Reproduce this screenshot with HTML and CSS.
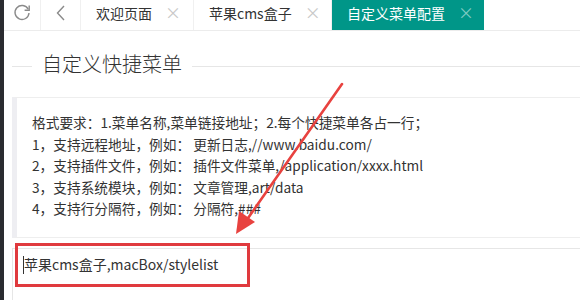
FILE: index.html
```html
<!DOCTYPE html>
<html lang="zh-CN">
<head>
<meta charset="utf-8">
<title>自定义菜单配置</title>
<link rel="stylesheet" href="styles.css">
</head>
<body>
<div class="frame">
  <div class="side-strip"></div>
  <div class="main">
    <div class="tabbar">
      <div class="tool">
        <svg width="20" height="20" viewBox="0 0 20 20"><path d="M16.2 6.2A7 7 0 1 0 17 10" fill="none" stroke="#8a8a8a" stroke-width="1.4"/><path d="M17.2 2.6 L17.2 7.2 L12.6 7.2" fill="none" stroke="#8a8a8a" stroke-width="1.4"/></svg>
      </div>
      <div class="tool">
        <svg width="12" height="18" viewBox="0 0 12 18"><path d="M9 2 L2.5 9 L9 16" fill="none" stroke="#8a8a8a" stroke-width="1.4"/></svg>
      </div>
      <div class="tab tab-w1">欢迎页面<span class="x">×</span></div>
      <div class="tab tab-w2">苹果cms盒子<span class="x">×</span></div>
      <div class="tab active">自定义菜单配置<span class="x">×</span></div>
    </div>
    <div class="content">
      <div class="field-title">
        <span class="line short"></span>
        <span class="legend">自定义快捷菜单</span>
        <span class="line long"></span>
      </div>
      <div class="quote">
        <p>格式要求：1.菜单名称,菜单链接地址；2.每个快捷菜单各占一行；</p>
        <p>1，支持远程地址，例如： 更新日志,//www.baidu.com/</p>
        <p>2，支持插件文件，例如： 插件文件菜单,/application/xxxx.html</p>
        <p>3，支持系统模块，例如： 文章管理,art/data</p>
        <p>4，支持行分隔符，例如： 分隔符,###</p>
      </div>
      <div class="textarea"><span class="caret"></span>苹果cms盒子,macBox/stylelist</div>
    </div>
  </div>
  <div class="highlight"></div>
  <svg class="arrow" width="580" height="300" viewBox="0 0 580 300">
    <path d="M342 84 L246 221" stroke="#e8423f" stroke-width="2.6" fill="none" stroke-linecap="round"/>
    <path d="M236 234 L239 211 L255 222 Z" fill="#e8423f"/>
  </svg>
</div>
</body>
</html>
```
FILE: styles.css
```css
* { box-sizing: border-box; }
html, body { margin: 0; padding: 0; background: #fff; }
body {
  font-family: "Noto Sans CJK SC", "Microsoft YaHei", sans-serif;
  color: #333;
  width: 580px;
  height: 300px;
  overflow: hidden;
}
.frame {
  position: relative;
  display: flex;
  width: 580px;
  height: 300px;
}
.side-strip {
  width: 4px;
  flex: none;
  background: #2a2b30;
}
.main {
  flex: 1;
  min-width: 0;
  display: flex;
  flex-direction: column;
}
.tabbar {
  display: flex;
  height: 31px;
  border-bottom: 1px solid #ececec;
  flex: none;
}
.tool {
  width: 37px;
  height: 30px;
  border-right: 1px solid #f0f0f0;
  display: flex;
  align-items: center;
  justify-content: center;
  padding-bottom: 4px;
}
.tool + .tool { width: 40px; }
.tab {
  height: 30px;
  line-height: 25px;
  font-size: 14px;
  color: #333;
  padding: 0 15px;
  border-right: 1px solid #f0f0f0;
  white-space: nowrap;
}
.tab-w1 { width: 113px; }
.tab-w2 { width: 138px; }
.tab .x {
  color: #c8c8c8;
  font-size: 16px;
  margin-left: 13px;
}
.tab.active {
  background: #009688;
  color: #fff;
  border-right: none;
  width: 152px;
}
.tab.active .x { color: #7fcac3; }
.content {
  padding: 0 0 0 8px;
  flex: 1;
  overflow: hidden;
  margin-right: -2px;
}
.field-title {
  display: flex;
  align-items: center;
  height: 36px;
  margin-top: 17px;
}
.line { height: 1px; background: #e6e6e6; }
.line.short { width: 20px; }
.line.long { flex: 1; }
.legend {
  font-size: 20px;
  font-weight: 300;
  color: #333;
  padding: 0 10px;
  line-height: 24px;
  margin-top: -4px;
}
.quote {
  margin-top: 13px;
  border: 1px solid #eee;
  border-left: 5px solid #eeeef2;
  padding: 14px 15px 17px 15px;
  font-size: 13.7px;
  line-height: 21.5px;
  color: #333;
}
.quote p { margin: 0; white-space: nowrap; }
.textarea {
  margin-top: 10px;
  border: 1px solid #e6e6e6;
  height: 80px;
  padding: 5px 10px;
  font-size: 14px;
  line-height: 20px;
  color: #333;
  white-space: nowrap;
}
.caret {
  display: inline-block;
  width: 1px;
  height: 18px;
  background: #333;
  vertical-align: -4px;
  margin-right: 0;
}
.highlight {
  position: absolute;
  left: 15px;
  top: 243px;
  width: 235px;
  height: 44px;
  border: 3px solid #e03a3e;
}
.arrow {
  position: absolute;
  left: 0;
  top: 0;
  pointer-events: none;
}
```
